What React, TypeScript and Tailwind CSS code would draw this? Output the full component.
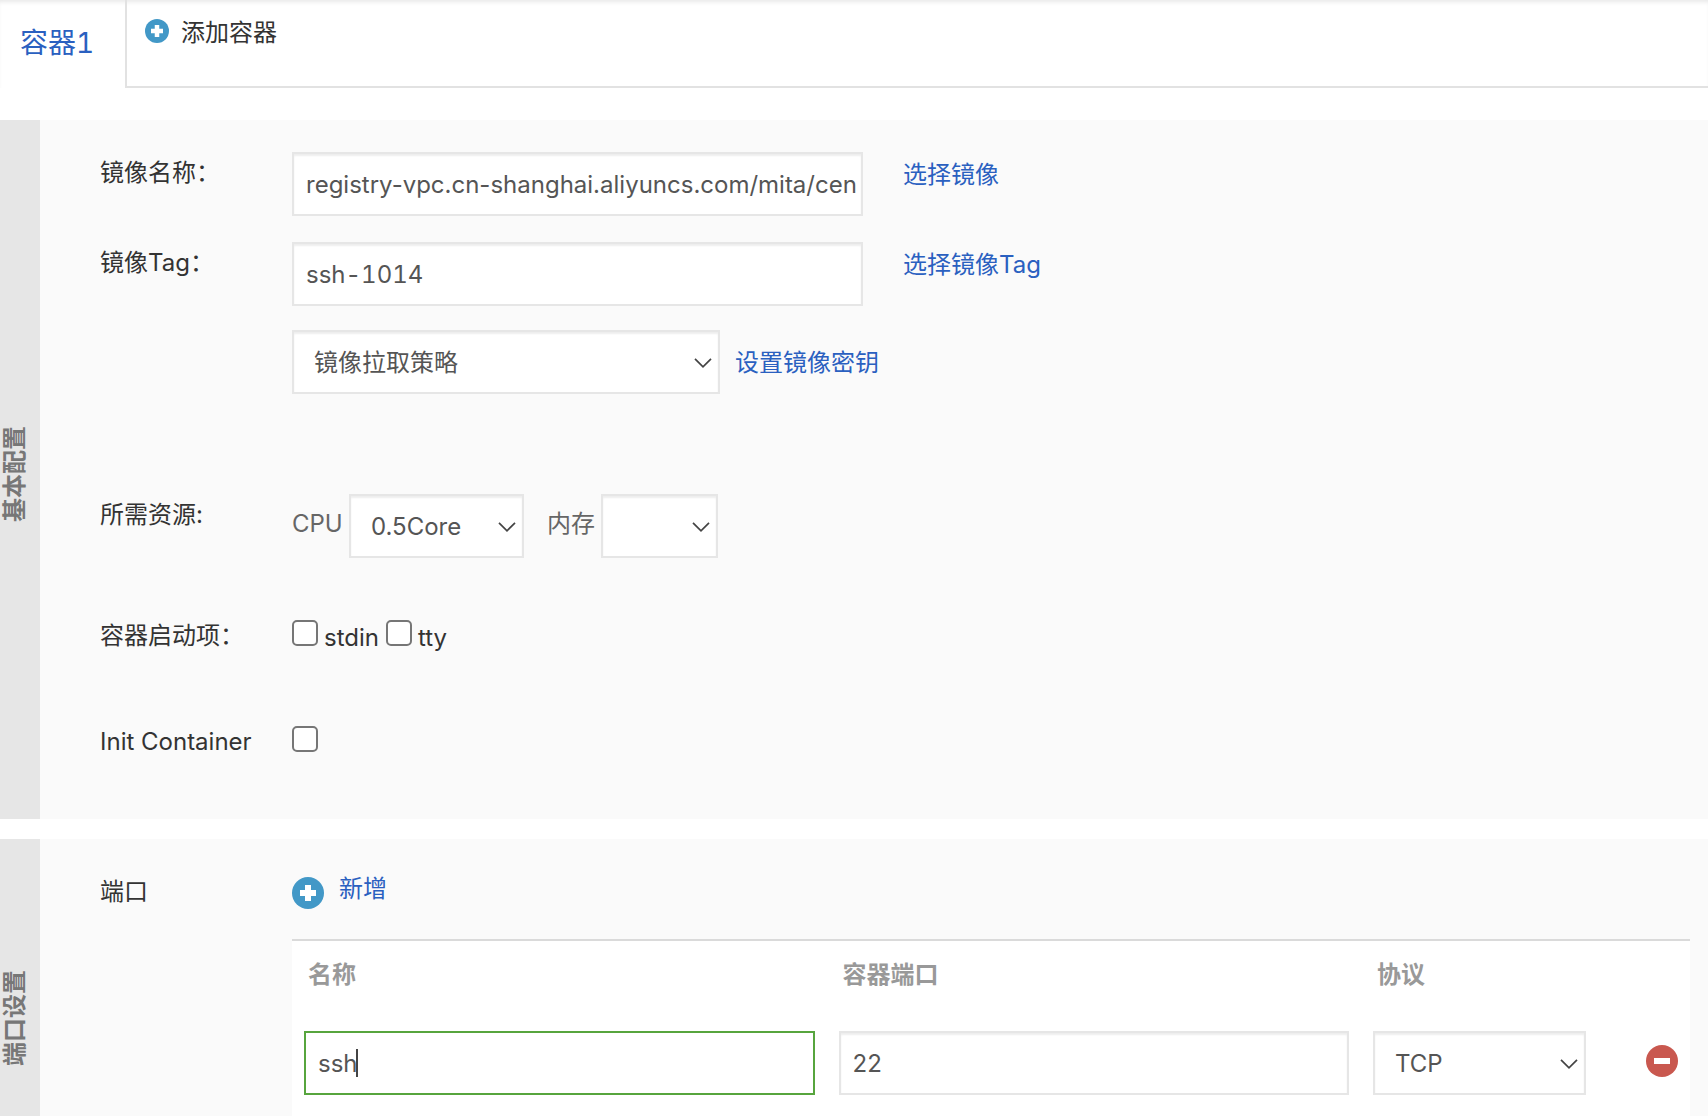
import { useState } from "react";
import type { InputHTMLAttributes, ReactNode, SelectHTMLAttributes } from "react";
import { clsx } from "clsx";

interface Port {
  id: number;
  name: string;
  containerPort: string;
  protocol: string;
}

const demoPorts: Port[] = [
  { id: 1, name: "ssh", containerPort: "22", protocol: "TCP" },
];

const PlusCircle = ({ className }: { className: string }) => (
  <svg viewBox="0 0 32 32" className={className} aria-hidden="true">
    <circle cx="16" cy="16" r="16" fill="#4298c7" />
    <path d="M13 8h6v5h5v6h-5v5h-6v-5H8v-6h5z" fill="#fff" />
  </svg>
);

const MinusCircle = ({ className }: { className: string }) => (
  <svg viewBox="0 0 32 32" className={className} aria-hidden="true">
    <circle cx="16" cy="16" r="16" fill="#c9584f" />
    <path d="M8 13h16v6H8z" fill="#fff" />
  </svg>
);

const TextInput = ({ className, ...props }: InputHTMLAttributes<HTMLInputElement>) => (
  <input
    type="text"
    className={clsx(
      "h-16 border-2 border-[#e6e6e6] bg-white pl-3 pr-1 text-[#555] shadow-[inset_0_2px_2px_#eee] outline-none focus:border-[#57a53e] focus:shadow-none",
      className
    )}
    {...props}
  />
);

const Select = ({ className, children, ...props }: SelectHTMLAttributes<HTMLSelectElement>) => (
  <div className={clsx("relative h-16", className)}>
    <select
      className="h-full w-full appearance-none border-2 border-[#e6e6e6] bg-white pl-5 pr-8 pt-0.5 text-[#555] shadow-[inset_0_2px_2px_#eee] outline-none"
      {...props}
    >
      {children}
    </select>
    <svg
      viewBox="0 0 18 10"
      className="pointer-events-none absolute right-2 top-7 h-[10px] w-[18px]"
      fill="none"
      stroke="#444"
      strokeWidth="1.7"
      aria-hidden="true"
    >
      <path d="M1 .8 9 8.8 17 .8" />
    </svg>
  </div>
);

const Checkbox = (props: InputHTMLAttributes<HTMLInputElement>) => (
  <input
    type="checkbox"
    className="mt-[5px] size-[26px] shrink-0 appearance-none rounded-[5px] border-2 border-[#767676] bg-white checked:bg-[#2a60c0]"
    {...props}
  />
);

const Link = ({ className, children }: { className?: string; children: ReactNode }) => (
  <a href="#" className={clsx("text-[#2a60c0]", className)}>
    {children}
  </a>
);

const Section = ({
  title,
  titleClass,
  className,
  children,
}: {
  title: string;
  titleClass: string;
  className?: string;
  children: ReactNode;
}) => (
  <section className={clsx("flex", className)}>
    <div className={clsx("flex w-10 shrink-0 flex-col justify-center bg-[#e6e6e6]", titleClass)}>
      <h2 className="w-[30px] rotate-180 text-center font-bold leading-[30px] text-[#777] [text-orientation:sideways] [writing-mode:vertical-rl]">
        {title}
      </h2>
    </div>
    <div className="min-w-0 flex-1 bg-[#fafafa] pl-[60px]">{children}</div>
  </section>
);

export default function App() {
  const [image, setImage] = useState("registry-vpc.cn-shanghai.aliyuncs.com/mita/cen");
  const [tag, setTag] = useState("ssh-1014");
  const [ports, setPorts] = useState(demoPorts);

  const updatePort = (id: number, patch: Partial<Port>) =>
    setPorts(ports.map((p) => (p.id === id ? { ...p, ...patch } : p)));

  const addPort = () =>
    setPorts([...ports, { id: Date.now(), name: "", containerPort: "", protocol: "TCP" }]);

  return (
    <div className="flex min-h-screen flex-col bg-white font-['Inter','Noto_Sans_CJK_SC',sans-serif] text-2xl leading-8 text-[#333]">
      {/* Container tabs */}
      <header className="flex h-[88px] shadow-[inset_0_4px_4px_-2px_#e8e8e8]">
        <a href="#" className="w-[125px] shrink-0 pl-5 pt-[27px] text-[28px] tabular-nums text-[#2a60c0]">
          容器1
        </a>
        <div className="flex-1 border-b-2 border-l-2 border-[#e2e2e2] pl-[18px] pt-[17px]">
          <button type="button" className="flex items-start gap-3">
            <PlusCircle className="mt-0.5 size-6" />
            添加容器
          </button>
        </div>
      </header>

      {/* Basic settings */}
      <Section title="基本配置" titleClass="pt-2" className="mt-8">
        <div className="flex pt-8">
          <label htmlFor="image" className="w-48 pt-[5px]">镜像名称：</label>
          <TextInput
            id="image"
            className="w-[571px]"
            value={image}
            onChange={(e) => setImage(e.target.value)}
          />
          <Link className="pl-10 pt-[7px]">选择镜像</Link>
        </div>
        <div className="flex pt-[26px]">
          <label htmlFor="tag" className="w-48 pt-[5px]">镜像Tag：</label>
          <TextInput
            id="tag"
            className="w-[571px] tabular-nums"
            value={tag}
            onChange={(e) => setTag(e.target.value)}
          />
          <Link className="pl-10 pt-[7px]">选择镜像Tag</Link>
        </div>
        <div className="flex items-center gap-[15px] pl-48 pt-6">
          <Select className="w-[428px]" aria-label="镜像拉取策略">
            <option>镜像拉取策略</option>
          </Select>
          <Link className="pt-0.5">设置镜像密钥</Link>
        </div>

        <div className="flex pt-[100px]">
          <div className="w-48 pt-[5px]">所需资源:</div>
          <label htmlFor="cpu" className="w-[57px] pt-[14px] text-[#666]">CPU</label>
          <Select id="cpu" className="w-[175px]">
            <option>0.5Core</option>
          </Select>
          <label htmlFor="memory" className="ml-[23px] w-[54px] pt-[14px] text-[#666]">内存</label>
          <Select id="memory" className="w-[117px]">
            <option></option>
          </Select>
        </div>

        <div className="flex pt-[57px]">
          <div className="w-48 pt-[5px]">容器启动项：</div>
          <Checkbox id="stdin" />
          <label htmlFor="stdin" className="pl-1.5 pr-[7px] pt-[7px]">stdin</label>
          <Checkbox id="tty" />
          <label htmlFor="tty" className="pl-1.5 pt-[7px]">tty</label>
        </div>
        <div className="flex pb-[61px] pt-[67px]">
          <label htmlFor="init" className="w-48 pt-[5px]">Init Container</label>
          <Checkbox id="init" />
        </div>
      </Section>

      {/* Port settings */}
      <Section title="端口设置" titleClass="pt-20" className="mt-5 flex-1">
        <div className="flex h-full pr-[18px]">
          <div className="w-48 shrink-0 pt-[37px]">端口</div>
          <div className="flex flex-1 flex-col">
            <button
              type="button"
              onClick={addPort}
              className="flex h-[100px] items-start gap-[15px] pt-[34px] text-[#2a60c0]"
            >
              <PlusCircle className="mt-1 size-8" />
              新增
            </button>
            <div className="flex-1 border-t-2 border-[#dadada] bg-white">
              <table className="w-full table-fixed">
                <thead>
                  <tr className="h-[78px] text-left align-top text-[#999]">
                    <th className="pl-4 pt-[18px] font-bold">名称</th>
                    <th className="pl-4 pt-[18px] font-bold">容器端口</th>
                    <th className="w-[237px] pl-4 pt-[18px] font-bold">协议</th>
                    <th className="w-[92px]"></th>
                  </tr>
                </thead>
                <tbody>
                  {ports.map((port) => (
                    <tr key={port.id}>
                      <td className="px-3 py-3">
                        <div className="relative">
                          <TextInput
                            className="block w-full caret-transparent"
                            aria-label="名称"
                            autoFocus
                            value={port.name}
                            onChange={(e) => updatePort(port.id, { name: e.target.value })}
                          />
                          <div className="pointer-events-none absolute inset-y-0 left-3 flex items-center">
                            <span className="invisible">{port.name}</span>
                            <span className="h-7 w-0.5 bg-[#444]" />
                          </div>
                        </div>
                      </td>
                      <td className="px-3 py-3">
                        <TextInput
                          className="block w-full"
                          aria-label="容器端口"
                          value={port.containerPort}
                          onChange={(e) => updatePort(port.id, { containerPort: e.target.value })}
                        />
                      </td>
                      <td className="px-3 py-3">
                        <Select
                          className="w-full"
                          aria-label="协议"
                          value={port.protocol}
                          onChange={(e) => updatePort(port.id, { protocol: e.target.value })}
                        >
                          <option>TCP</option>
                          <option>UDP</option>
                        </Select>
                      </td>
                      <td className="px-3 pb-1">
                        <button
                          type="button"
                          aria-label="删除"
                          className="ml-auto block"
                          onClick={() => setPorts(ports.filter((p) => p.id !== port.id))}
                        >
                          <MinusCircle className="size-8" />
                        </button>
                      </td>
                    </tr>
                  ))}
                </tbody>
              </table>
            </div>
          </div>
        </div>
      </Section>
    </div>
  );
}
